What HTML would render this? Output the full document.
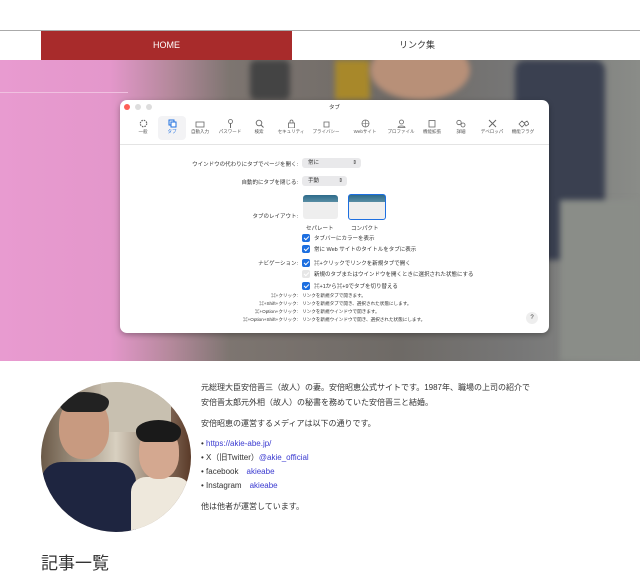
<!DOCTYPE html>
<html><head><meta charset="utf-8">
<style>
*{margin:0;padding:0;box-sizing:border-box}
body{width:640px;height:562px;overflow:hidden;background:#fff;font-family:"Liberation Sans","Noto Sans CJK JP",sans-serif;color:#333;position:relative}
.abs{position:absolute}
.nav{top:30px;left:0;width:640px;height:30px;border-top:1px solid #aaa;}
.home{left:41px;top:0;width:251px;height:30px;background:#a82b2b;color:#fff;font-size:9px;text-align:center;line-height:29px}
.link{left:292px;top:0;width:250px;height:30px;color:#333;font-size:9px;text-align:center;line-height:29px}
.hero{top:60px;left:0;width:640px;height:301px;overflow:hidden;
background:linear-gradient(90deg,#e89bd0 0,#e497cb 110px,#b5899c 170px,#7d7570 230px,#6e6a66 400px,#777 520px,#8a8c88 640px)}
.dlg{left:120px;top:100px;width:429px;height:233px;background:#fff;border-radius:7px;box-shadow:0 2px 6px rgba(0,0,0,.3);font-size:5.5px;color:#333}
.tb{position:absolute;top:19px;text-align:center;width:34px;font-size:4.5px;color:#555}
.tb svg{display:block;margin:0 auto 1px}
.lbl{position:absolute;right:251px;text-align:right;font-size:5.5px;white-space:nowrap}
.pop{position:absolute;background:#e9e9eb;border-radius:3px;height:10px;font-size:5.5px;line-height:10px;padding-left:6px}
.cb{position:absolute;left:182px;width:8px;height:8px;border-radius:2px;background:#1d6fe0}
.cb::after{content:"";position:absolute;left:2.5px;top:1px;width:2px;height:4px;border:solid #fff;border-width:0 1.2px 1.2px 0;transform:rotate(45deg)}
.ct{position:absolute;left:194px;font-size:5.5px;white-space:nowrap}
.sm{position:absolute;font-size:4.6px;white-space:nowrap}
.txt{left:201px;font-size:8px;line-height:15px;color:#333}
a{color:#3a3ad0;text-decoration:none}
.blob{position:absolute;filter:blur(3px)}
</style></head><body>
<div class="abs nav"><div class="abs home">HOME</div><div class="abs link">リンク集</div></div>
<div class="abs hero">
 <div class="abs" style="left:0;top:32px;width:128px;height:1px;background:#f0c0e0"></div>
 <div class="blob" style="left:250px;top:0;width:40px;height:40px;background:#444;border-radius:6px"></div>
 <div class="blob" style="left:335px;top:0;width:35px;height:40px;background:#a8882a"></div>
 <div class="blob" style="left:370px;top:-20px;width:100px;height:60px;background:#b89078;border-radius:50%"></div>
 <div class="blob" style="left:515px;top:0;width:90px;height:200px;background:#3a4050;border-radius:10px"></div>
 <div class="blob" style="left:560px;top:140px;width:80px;height:161px;background:#8a8d88"></div>
</div>
<div class="abs dlg">
 <div class="abs" style="left:4px;top:4px;width:6px;height:6px;border-radius:50%;background:#fe5f57"></div>
 <div class="abs" style="left:15px;top:4px;width:6px;height:6px;border-radius:50%;background:#ddd"></div>
 <div class="abs" style="left:26px;top:4px;width:6px;height:6px;border-radius:50%;background:#ddd"></div>
 <div class="abs" style="left:0;top:3px;width:429px;text-align:center;font-size:5.5px">タブ</div>
 <div class="abs" style="left:38px;top:16px;width:28px;height:24px;background:#f3f3f5;border-radius:4px"></div>
 <div class="tb" style="left:6px"><svg width="9" height="9"><circle cx="4.5" cy="4.5" r="3.2" fill="none" stroke="#666" stroke-width="1.2" stroke-dasharray="1.5 1"/></svg>一般</div>
 <div class="tb" style="left:35px;color:#1d6fe0"><svg width="9" height="9"><rect x="1" y="1" width="5" height="5" fill="none" stroke="#1d6fe0"/><rect x="3" y="3" width="5" height="5" fill="#fff" stroke="#1d6fe0"/></svg>タブ</div>
 <div class="tb" style="left:63px"><svg width="10" height="9"><rect x="1" y="3" width="8" height="5" fill="none" stroke="#666" stroke-width=".8"/></svg>自動入力</div>
 <div class="tb" style="left:93px"><svg width="9" height="9"><circle cx="4.5" cy="2.5" r="2" fill="none" stroke="#666" stroke-width=".8"/><path d="M4.5 4.5V9" stroke="#666"/></svg>パスワード</div>
 <div class="tb" style="left:122px"><svg width="9" height="9"><circle cx="4" cy="4" r="2.8" fill="none" stroke="#666" stroke-width=".9"/><path d="M6 6L8.5 8.5" stroke="#666"/></svg>検索</div>
 <div class="tb" style="left:154px"><svg width="9" height="9"><rect x="1.5" y="4" width="6" height="5" fill="none" stroke="#666" stroke-width=".8"/><path d="M3 4V2.5a1.5 1.5 0 013 0V4" fill="none" stroke="#666" stroke-width=".8"/></svg>セキュリティ</div>
 <div class="tb" style="left:189px"><svg width="9" height="9"><path d="M2 8V3h5v5z" fill="none" stroke="#666" stroke-width=".8"/></svg>プライバシー</div>
 <div class="tb" style="left:228px"><svg width="9" height="9"><circle cx="4.5" cy="4.5" r="3.5" fill="none" stroke="#666" stroke-width=".8"/><path d="M1 4.5h7M4.5 1v7" stroke="#666" stroke-width=".6"/></svg>Webサイト</div>
 <div class="tb" style="left:264px"><svg width="9" height="9"><circle cx="4.5" cy="3" r="2" fill="none" stroke="#666" stroke-width=".8"/><path d="M1 8.5c0-2 7-2 7 0z" fill="none" stroke="#666" stroke-width=".8"/></svg>プロファイル</div>
 <div class="tb" style="left:295px"><svg width="9" height="9"><rect x="1" y="1.5" width="6" height="6.5" fill="none" stroke="#666" stroke-width=".8"/></svg>機能拡張</div>
 <div class="tb" style="left:324px"><svg width="10" height="9"><circle cx="3" cy="3.5" r="2.2" fill="none" stroke="#666" stroke-width=".8"/><circle cx="7" cy="6" r="2" fill="none" stroke="#666" stroke-width=".8"/></svg>詳細</div>
 <div class="tb" style="left:355px"><svg width="9" height="9"><path d="M1 1l7 7M8 1L1 8" stroke="#666" stroke-width="1"/></svg>デベロッパ</div>
 <div class="tb" style="left:386px"><svg width="11" height="9"><path d="M1 5l3-3 3 3-3 3zM6 4l3-2 2 3-3 2z" fill="none" stroke="#666" stroke-width=".8"/></svg>機能フラグ</div>
 <div class="abs" style="left:0;top:44px;width:429px;height:1px;background:#e4e4e4"></div>
 <div class="lbl" style="top:60px">ウインドウの代わりにタブでページを開く:</div>
 <div class="pop" style="left:182px;top:58px;width:59px">常に<span style="position:absolute;right:4px">⇕</span></div>
 <div class="lbl" style="top:78px">自動的にタブを閉じる:</div>
 <div class="pop" style="left:182px;top:76px;width:45px">手動<span style="position:absolute;right:4px">⇕</span></div>
 <div class="abs" style="left:183px;top:95px;width:35px;height:24px;border-radius:3px;background:linear-gradient(#2d6a8a 0,#5a8ea5 30%,#eee 30%)"></div>
 <div class="abs" style="left:228px;top:94px;width:38px;height:26px;border-radius:3px;border:1.5px solid #1d6fe0;background:linear-gradient(#2d6a8a 0,#5a8ea5 30%,#eee 30%)"></div>
 <div class="lbl" style="top:112px">タブのレイアウト:</div>
 <div class="ct" style="left:186px;top:124px">セパレート</div>
 <div class="ct" style="left:231px;top:124px">コンパクト</div>
 <div class="cb" style="top:134px"></div><div class="ct" style="top:134px">タブバーにカラーを表示</div>
 <div class="cb" style="top:145px"></div><div class="ct" style="top:145px">常に Web サイトのタイトルをタブに表示</div>
 <div class="lbl" style="top:159px">ナビゲーション:</div>
 <div class="cb" style="top:159px"></div><div class="ct" style="top:159px">⌘+クリックでリンクを新規タブで開く</div>
 <div class="cb" style="top:170px;background:#e6e6e6"></div><div class="ct" style="top:170px">新規のタブまたはウインドウを開くときに選択された状態にする</div>
 <div class="cb" style="top:182px"></div><div class="ct" style="top:182px">⌘+1から⌘+9でタブを切り替える</div>
 <div class="sm" style="right:251px;top:193px">⌘+クリック:</div><div class="sm" style="left:182px;top:193px">リンクを新規タブで開きます。</div>
 <div class="sm" style="right:251px;top:201px">⌘+Shift+クリック:</div><div class="sm" style="left:182px;top:201px">リンクを新規タブで開き、選択された状態にします。</div>
 <div class="sm" style="right:251px;top:209px">⌘+Option+クリック:</div><div class="sm" style="left:182px;top:209px">リンクを新規ウインドウで開きます。</div>
 <div class="sm" style="right:251px;top:217px">⌘+Option+Shift+クリック:</div><div class="sm" style="left:182px;top:217px">リンクを新規ウインドウで開き、選択された状態にします。</div>
 <div class="abs" style="left:406px;top:212px;width:12px;height:12px;border-radius:50%;background:#eee;font-size:6px;text-align:center;line-height:12px">?</div>
</div>
<div class="abs" style="left:41px;top:382px;width:150px;height:150px;border-radius:50%;overflow:hidden;background:linear-gradient(90deg,#6b5a48 0,#d8d0c0 50%,#5a3a28 100%)">
 <div class="abs" style="left:60px;top:-10px;width:70px;height:60px;background:#c8c0b0"></div>
 <div class="abs" style="left:0;top:80px;width:95px;height:80px;background:#1e2540;border-radius:20px 20px 0 0"></div>
 <div class="abs" style="left:18px;top:15px;width:50px;height:62px;background:#c89a80;border-radius:45%"></div>
 <div class="abs" style="left:18px;top:10px;width:50px;height:20px;background:#222;border-radius:50% 50% 10px 10px"></div>
 <div class="abs" style="left:90px;top:95px;width:60px;height:70px;background:#eee8dc;border-radius:15px 15px 0 0"></div>
 <div class="abs" style="left:98px;top:45px;width:40px;height:52px;background:#d4a890;border-radius:45%"></div>
 <div class="abs" style="left:95px;top:38px;width:45px;height:22px;background:#1a1a1a;border-radius:50% 50% 10px 10px"></div>
</div>
<div class="abs txt" style="top:380px">
<p>元総理大臣安倍晋三（故人）の妻。安倍昭恵公式サイトです。1987年、職場の上司の紹介で<br>安倍晋太郎元外相（故人）の秘書を務めていた安倍晋三と結婚。</p>
<p style="margin-top:6px">安倍昭恵の運営するメディアは以下の通りです。</p>
<p style="margin-top:6px;line-height:14px">• <a>https://akie-abe.jp/</a><br>• X（旧Twitter）<a>@akie_official</a><br>• facebook　<a>akieabe</a><br>• Instagram　<a>akieabe</a></p>
<p style="margin-top:6px">他は他者が運営しています。</p>
</div>
<div class="abs" style="left:41px;top:549px;font-size:17px;color:#333">記事一覧</div>
</body></html>
